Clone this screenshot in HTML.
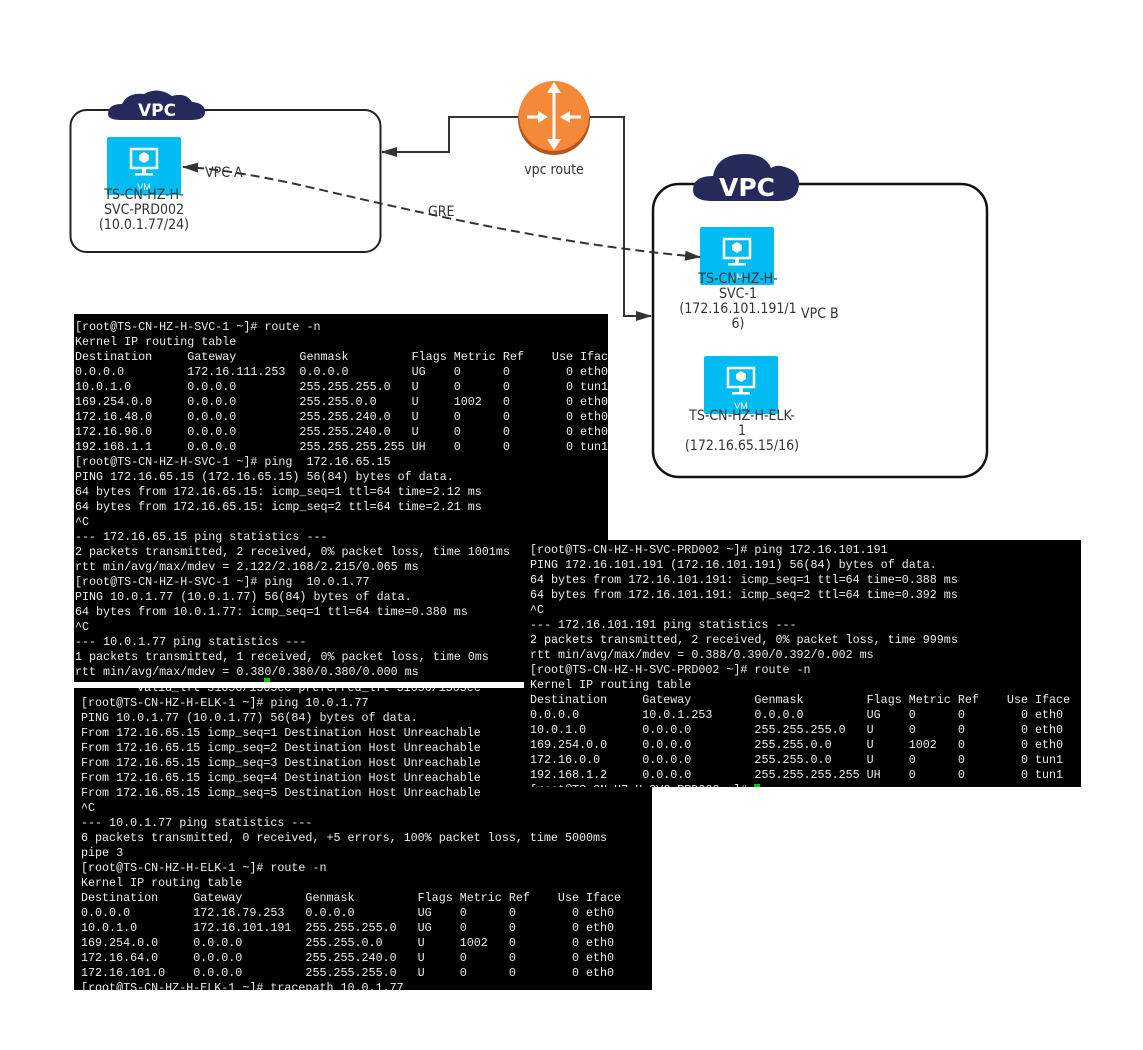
<!DOCTYPE html>
<html><head><meta charset="utf-8"><style>
body{margin:0;width:1143px;height:1050px;background:#fff;position:relative;overflow:hidden;font-family:"Liberation Sans",sans-serif}
.t{position:absolute;background:#000;overflow:hidden}
.t pre{margin:0;font-family:"Liberation Mono",monospace;font-size:11.7px;line-height:15px;color:#ececec;white-space:pre;position:absolute}
.lab{position:absolute;font-size:14px;color:#333;text-align:center;line-height:15px;font-family:"DejaVu Sans Condensed","DejaVu Sans",sans-serif}
</style></head><body>
<svg width="1143" height="1050" style="position:absolute;left:0;top:0">
<defs>
<marker id="ar2" markerWidth="16" markerHeight="10" refX="15" refY="5" orient="auto-start-reverse" markerUnits="userSpaceOnUse"><path d="M0,0 L16,5 L0,10 Z" fill="#333"/></marker>
<g id="vm"><rect width="74" height="58" rx="2" fill="#00bcf2"/><rect x="24" y="12" width="26" height="19" fill="none" stroke="#fff" stroke-width="2.5"/><rect x="35" y="32" width="4" height="4" fill="#fff"/><rect x="28" y="36" width="18" height="2.5" fill="#fff"/><path d="M37,15 l5,3 v5 l-5,3 l-5,-3 v-5z" fill="#fff"/><text x="37" y="53" font-size="9" fill="#fff" text-anchor="middle" font-family="Liberation Sans">VM</text></g>
</defs>
<rect x="70.5" y="110" width="310" height="142" rx="16" fill="none" stroke="#222" stroke-width="2"/>
<rect x="653" y="184" width="334" height="293" rx="26" fill="none" stroke="#111" stroke-width="2.5"/>
<path d="M108,114 q0,-10 14,-10 q6,-12 22,-10 q14,-8 28,2 q14,-4 20,6 q13,1 13,10 q0,8 -14,8 h-70 q-13,0 -13,-6z" fill="#252a5b"/>
<text x="157" y="116" font-size="17" font-weight="bold" fill="#fff" text-anchor="middle" font-family="DejaVu Sans">VPC</text>
<path d="M693,190 q0,-14 20,-14 q4,-22 32,-22 q20,0 26,14 q6,-4 14,-1 q14,4 14,16 q0,18 -20,18 h-66 q-20,0 -20,-11z" fill="#252a5b"/>
<text x="747" y="196" font-size="25" font-weight="bold" fill="#fff" text-anchor="middle" font-family="DejaVu Sans">VPC</text>
<use href="#vm" x="107" y="137"/>
<use href="#vm" x="700" y="227"/>
<use href="#vm" x="704" y="356"/>
<circle cx="554" cy="119" r="36" fill="#b0551d"/>
<circle cx="554" cy="116" r="35" fill="#f5893a"/>
<g stroke="#fff" stroke-width="3" fill="#fff">
<line x1="554" y1="90" x2="554" y2="143"/><path d="M547,93 L554,82 L561,93Z" stroke="none"/><path d="M547,139 L554,150 L561,139Z" stroke="none"/>
<line x1="527" y1="117" x2="540" y2="117"/><path d="M538,111 L548,117 L538,123Z" stroke="none"/>
<line x1="568" y1="117" x2="581" y2="117"/><path d="M570,111 L560,117 L570,123Z" stroke="none"/>
</g>
<path d="M518,117 H449 V152 H382" fill="none" stroke="#333" stroke-width="2" marker-end="url(#ar2)"/>
<path d="M590,117 H624 V316 H651" fill="none" stroke="#333" stroke-width="2" marker-end="url(#ar2)"/>
<path d="M700,257 C560,245 430,215 300,185 C250,174 210,168 183,167" fill="none" stroke="#333" stroke-width="2" stroke-dasharray="9,5" marker-start="url(#ar2)" marker-end="url(#ar2)"/>
</svg>
<div class="lab" style="left:520px;top:163px;width:68px">vpc route</div>
<div class="lab" style="left:205px;top:166px">VPC A</div>
<div class="lab" style="left:428px;top:205px">GRE</div>
<div class="lab" style="left:79px;top:188px;width:130px">TS-CN-HZ-H-<br>SVC-PRD002<br>(10.0.1.77/24)</div>
<div class="lab" style="left:672px;top:272px;width:132px">TS-CN-HZ-H-<br>SVC-1<br>(172.16.101.191/1<br>6)</div>
<div class="lab" style="left:801px;top:307px">VPC B</div>
<div class="lab" style="left:667px;top:409px;width:150px">TS-CN-HZ-H-ELK-<br>1<br>(172.16.65.15/16)</div>

<div class="t" style="left:74px;top:314px;width:534px;height:368px"><pre style="left:1px;top:6px">[root@TS-CN-HZ-H-SVC-1 ~]# route -n
Kernel IP routing table
Destination     Gateway         Genmask         Flags Metric Ref    Use Iface
0.0.0.0         172.16.111.253  0.0.0.0         UG    0      0        0 eth0
10.0.1.0        0.0.0.0         255.255.255.0   U     0      0        0 tun1
169.254.0.0     0.0.0.0         255.255.0.0     U     1002   0        0 eth0
172.16.48.0     0.0.0.0         255.255.240.0   U     0      0        0 eth0
172.16.96.0     0.0.0.0         255.255.240.0   U     0      0        0 eth0
192.168.1.1     0.0.0.0         255.255.255.255 UH    0      0        0 tun1
[root@TS-CN-HZ-H-SVC-1 ~]# ping  172.16.65.15
PING 172.16.65.15 (172.16.65.15) 56(84) bytes of data.
64 bytes from 172.16.65.15: icmp_seq=1 ttl=64 time=2.12 ms
64 bytes from 172.16.65.15: icmp_seq=2 ttl=64 time=2.21 ms
^C
--- 172.16.65.15 ping statistics ---
2 packets transmitted, 2 received, 0% packet loss, time 1001ms
rtt min/avg/max/mdev = 2.122/2.168/2.215/0.065 ms
[root@TS-CN-HZ-H-SVC-1 ~]# ping  10.0.1.77
PING 10.0.1.77 (10.0.1.77) 56(84) bytes of data.
64 bytes from 10.0.1.77: icmp_seq=1 ttl=64 time=0.380 ms
^C
--- 10.0.1.77 ping statistics ---
1 packets transmitted, 1 received, 0% packet loss, time 0ms
rtt min/avg/max/mdev = 0.380/0.380/0.380/0.000 ms</pre><div style="position:absolute;left:190px;top:364px;width:6px;height:4px;background:#0c0"></div></div>

<div class="t" style="left:74px;top:688px;width:578px;height:302px"><pre style="left:7px;top:-7px">        valid_lft 31656/1505ec preferred_lft 31656/1505ec
[root@TS-CN-HZ-H-ELK-1 ~]# ping 10.0.1.77
PING 10.0.1.77 (10.0.1.77) 56(84) bytes of data.
From 172.16.65.15 icmp_seq=1 Destination Host Unreachable
From 172.16.65.15 icmp_seq=2 Destination Host Unreachable
From 172.16.65.15 icmp_seq=3 Destination Host Unreachable
From 172.16.65.15 icmp_seq=4 Destination Host Unreachable
From 172.16.65.15 icmp_seq=5 Destination Host Unreachable
^C
--- 10.0.1.77 ping statistics ---
6 packets transmitted, 0 received, +5 errors, 100% packet loss, time 5000ms
pipe 3
[root@TS-CN-HZ-H-ELK-1 ~]# route -n
Kernel IP routing table
Destination     Gateway         Genmask         Flags Metric Ref    Use Iface
0.0.0.0         172.16.79.253   0.0.0.0         UG    0      0        0 eth0
10.0.1.0        172.16.101.191  255.255.255.0   UG    0      0        0 eth0
169.254.0.0     0.0.0.0         255.255.0.0     U     1002   0        0 eth0
172.16.64.0     0.0.0.0         255.255.240.0   U     0      0        0 eth0
172.16.101.0    0.0.0.0         255.255.255.0   U     0      0        0 eth0
[root@TS-CN-HZ-H-ELK-1 ~]# tracepath 10.0.1.77</pre></div>

<div class="t" style="left:524px;top:540px;width:557px;height:247px"><pre style="left:6px;top:3px">[root@TS-CN-HZ-H-SVC-PRD002 ~]# ping 172.16.101.191
PING 172.16.101.191 (172.16.101.191) 56(84) bytes of data.
64 bytes from 172.16.101.191: icmp_seq=1 ttl=64 time=0.388 ms
64 bytes from 172.16.101.191: icmp_seq=2 ttl=64 time=0.392 ms
^C
--- 172.16.101.191 ping statistics ---
2 packets transmitted, 2 received, 0% packet loss, time 999ms
rtt min/avg/max/mdev = 0.388/0.390/0.392/0.002 ms
[root@TS-CN-HZ-H-SVC-PRD002 ~]# route -n
Kernel IP routing table
Destination     Gateway         Genmask         Flags Metric Ref    Use Iface
0.0.0.0         10.0.1.253      0.0.0.0         UG    0      0        0 eth0
10.0.1.0        0.0.0.0         255.255.255.0   U     0      0        0 eth0
169.254.0.0     0.0.0.0         255.255.0.0     U     1002   0        0 eth0
172.16.0.0      0.0.0.0         255.255.0.0     U     0      0        0 tun1
192.168.1.2     0.0.0.0         255.255.255.255 UH    0      0        0 tun1
[root@TS-CN-HZ-H-SVC-PRD002 ~]# </pre><div style="position:absolute;left:230px;top:244px;width:6px;height:3px;background:#0c0"></div></div>
</body></html>
